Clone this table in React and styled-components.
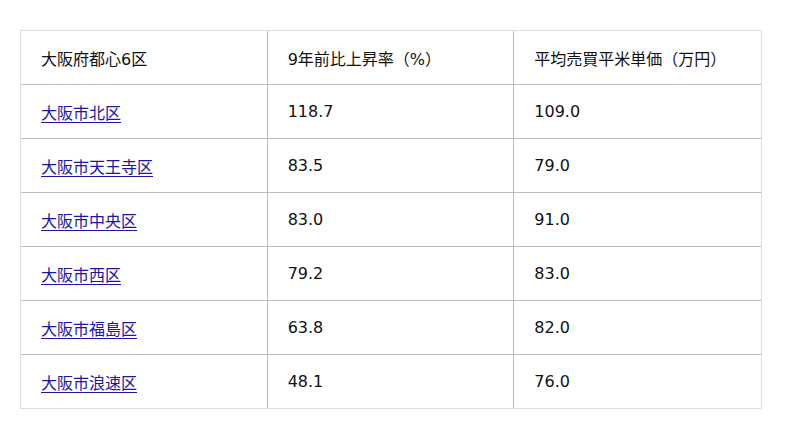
import React from 'react'
import styled, { createGlobalStyle } from 'styled-components'

const GlobalStyle = createGlobalStyle`
    html, body {
        margin:0;
        padding:0;
        background:#fff;
    }
    body {
        font-family:"DejaVu Sans", "Noto Sans CJK JP", sans-serif;
        color:#111;
    }
`

const Page = styled.div`
    padding:30px 20px 0 20px;
`

const Table = styled.table`
    width:742px;
    border-collapse:separate;
    border-spacing:0;
    border:1px solid #dedede;
    table-layout:fixed;
`

const Cell = styled.td`
    height:53px;
    padding:0 20px;
    font-size:16px;
    vertical-align:middle;
    border-right:1px solid #bdbdbd;
    border-bottom:1px solid #bdbdbd;
    box-sizing:content-box;
    white-space:nowrap;

    &:last-child {
        border-right:none;
    }
    tr:last-child > & {
        border-bottom:none;
    }
`

const Link = styled.a`
    color:#1c17a3;
    text-decoration:underline;
    text-underline-offset:3px;
`

const rows = [
    ['大阪市北区', '118.7', '109.0'],
    ['大阪市天王寺区', '83.5', '79.0'],
    ['大阪市中央区', '83.0', '91.0'],
    ['大阪市西区', '79.2', '83.0'],
    ['大阪市福島区', '63.8', '82.0'],
    ['大阪市浪速区', '48.1', '76.0'],
]

function App() {
    return (
        <Page>
            <GlobalStyle />
            <Table>
                <tbody>
                    <tr>
                        <Cell>大阪府都心6区</Cell>
                        <Cell>9年前比上昇率（%）</Cell>
                        <Cell>平均売買平米単価（万円）</Cell>
                    </tr>
                    {rows.map(([name, rate, price]) => (
                        <tr key={name}>
                            <Cell><Link href="#">{name}</Link></Cell>
                            <Cell>{rate}</Cell>
                            <Cell>{price}</Cell>
                        </tr>
                    ))}
                </tbody>
            </Table>
        </Page>
    )
}

export default App
